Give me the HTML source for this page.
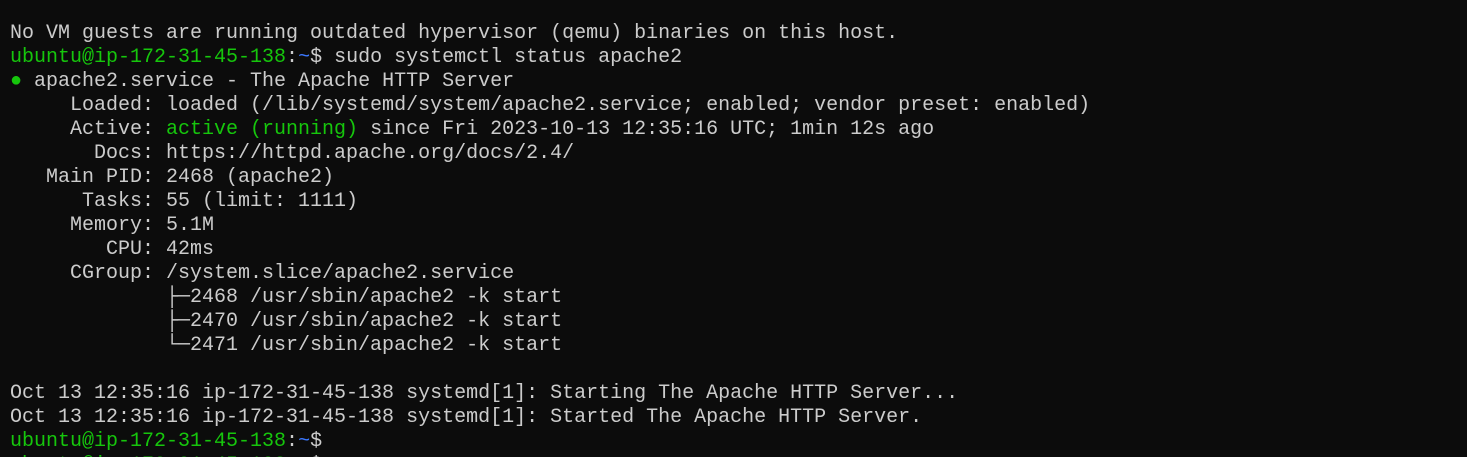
<!DOCTYPE html>
<html><head><meta charset="utf-8"><style>
html,body{margin:0;padding:0;background:#0c0c0c;width:1467px;height:457px;overflow:hidden}
pre{margin:0;padding:22px 0 0 10px;font-family:"Liberation Mono","DejaVu Sans Mono",monospace;font-size:20px;line-height:24px;color:#cccccc;white-space:pre}
.g{color:#16c60c}.b{color:#3b78ff}
</style></head><body><pre>No VM guests are running outdated hypervisor (qemu) binaries on this host.
<span class="g">ubuntu@ip-172-31-45-138</span>:<span class="b">~</span>$ sudo systemctl status apache2
<span class="g">●</span> apache2.service - The Apache HTTP Server
     Loaded: loaded (/lib/systemd/system/apache2.service; enabled; vendor preset: enabled)
     Active: <span class="g">active (running)</span> since Fri 2023-10-13 12:35:16 UTC; 1min 12s ago
       Docs: https://httpd.apache.org/docs/2.4/
   Main PID: 2468 (apache2)
      Tasks: 55 (limit: 1111)
     Memory: 5.1M
        CPU: 42ms
     CGroup: /system.slice/apache2.service
             ├─2468 /usr/sbin/apache2 -k start
             ├─2470 /usr/sbin/apache2 -k start
             └─2471 /usr/sbin/apache2 -k start

Oct 13 12:35:16 ip-172-31-45-138 systemd[1]: Starting The Apache HTTP Server...
Oct 13 12:35:16 ip-172-31-45-138 systemd[1]: Started The Apache HTTP Server.
<span class="g">ubuntu@ip-172-31-45-138</span>:<span class="b">~</span>$
<span class="g">ubuntu@ip-172-31-45-138</span>:<span class="b">~</span>$
</pre></body></html>
